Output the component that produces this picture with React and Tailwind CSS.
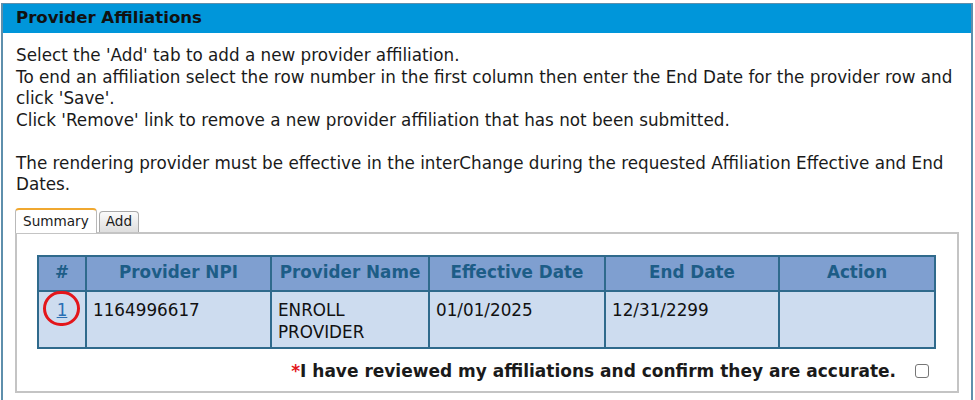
import React from "react";

const cols = [
  { label: "#", w: "w-[48px]" },
  { label: "Provider NPI", w: "w-[185px]" },
  { label: "Provider Name", w: "w-[158px]" },
  { label: "Effective Date", w: "w-[176px]" },
  { label: "End Date", w: "w-[174px]" },
  { label: "Action", w: "" },
];

const AffiliationTable = () => (
  <table className="w-[899px] table-fixed border-collapse border-2 border-[#2f6a8c] text-[16.8px]">
    <thead>
      <tr className="bg-[#7f9fd0] h-[35px]">
        {cols.map((c) => (
          <th
            key={c.label}
            className={`${c.w} border-2 border-[#2f6a8c] font-bold text-[#1d5d87] text-center`}
          >
            {c.label}
          </th>
        ))}
      </tr>
    </thead>
    <tbody>
      <tr className="bg-[#cddcef] h-[57px] align-top text-[#111] leading-[22px]">
        <td className="border-2 border-[#2f6a8c] text-center pt-[7px] relative">
          <a href="#" className="text-[#2a6fb4] underline">
            1
          </a>
          <span className="absolute left-[4px] top-[-1px] w-[37px] h-[35px] rounded-full border-[3px] border-[#e3161b]" />
        </td>
        <td className="border-2 border-[#2f6a8c] px-[6px] pt-[7px]">1164996617</td>
        <td className="border-2 border-[#2f6a8c] px-[6px] pt-[7px]">
          ENROLL
          <br />
          PROVIDER
        </td>
        <td className="border-2 border-[#2f6a8c] px-[6px] pt-[7px]">01/01/2025</td>
        <td className="border-2 border-[#2f6a8c] px-[6px] pt-[7px]">12/31/2299</td>
        <td className="border-2 border-[#2f6a8c]"></td>
      </tr>
    </tbody>
  </table>
);

export default function App() {
  return (
    <div className="w-[975px] h-[400px] bg-white overflow-hidden font-['DejaVu_Sans',Verdana,sans-serif] text-[#1a1a1a]">
      <div className="ml-[1px] mt-[3px] w-[972px] h-[397px] border-x-2 border-t border-[#5e8fac]">
        <div className="h-[29px] bg-[#0096da] pl-[13px] flex items-center">
          <h2 className="text-[16.6px] font-bold text-[#111]">Provider Affiliations</h2>
        </div>
        <div className="pl-[13px] pr-[6px] pt-[12px] text-[16.8px] leading-[21.5px]">
          <p>Select the 'Add' tab to add a new provider affiliation.</p>
          <p>
            To end an affiliation select the row number in the first column then enter the End
            Date for the provider row and click 'Save'.
          </p>
          <p>Click 'Remove' link to remove a new provider affiliation that has not been submitted.</p>
          <p className="mt-[21.5px]">
            The rendering provider must be effective in the interChange during the requested
            Affiliation Effective and End Dates.
          </p>
        </div>
        <div className="ml-[12px] mt-[12px] w-[944px]">
          <div className="flex items-end gap-[2px] text-[13.6px]">
            <div className="h-[25px] px-[7px] flex items-center bg-white border border-b-0 border-[#b9b9b9] border-t-2 border-t-[#f0a830] rounded-t-[4px] -mb-px relative z-10">
              Summary
            </div>
            <div className="h-[21px] px-[6px] flex items-center bg-gradient-to-b from-[#fbfbfb] to-[#dedede] border border-b-0 border-[#a9a9a9] rounded-t-[4px]">
              Add
            </div>
          </div>
          <div className="h-[161px] border-2 border-[#c4c4c4] pl-[20px] pt-[21px]">
            <AffiliationTable />
            <div className="flex items-center justify-end pr-[28px] mt-[10px] text-[17px] font-bold">
              <span className="text-[#e3161b]">*</span>
              <span>I have reviewed my affiliations and confirm they are accurate.</span>
              <input
                type="checkbox"
                className="ml-[19px] w-[14px] h-[14px] appearance-none border border-[#767676] rounded-[3px] bg-white"
              />
            </div>
          </div>
        </div>
      </div>
    </div>
  );
}
